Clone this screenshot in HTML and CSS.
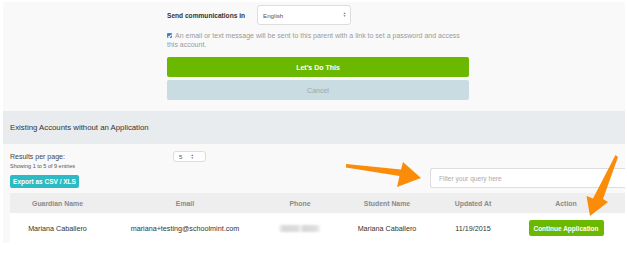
FILE: index.html
```html
<!DOCTYPE html>
<html lang="en">
<head>
    <meta charset="UTF-8">
    <meta name="viewport" content="width=device-width, initial-scale=1.0">
    <title>Existing Accounts</title>
    <link rel="stylesheet" href="styles.css">
</head>
<body>

    <div class="panel">
        <div class="parent-form">
            <div class="lang-row">
                <span class="lang-label">Send communications in</span>
                <div class="select lang-select">English<span class="caret">&#9650;<br>&#9660;</span></div>
            </div>
            <p class="notice"><span class="check"></span>An email or text message will be sent to this parent with a link to set a password and access this account.</p>
            <button class="btn-go">Let's Do This</button>
            <button class="btn-cancel">Cancel</button>
        </div>

        <div class="section-head">Existing Accounts without an Application</div>

        <div class="controls">
            <div class="controls-left">
                <div class="per-page">
                    <span>Results per page:</span>
                    <div class="select page-select">5<span class="caret">&#9650;<br>&#9660;</span></div>
                </div>
                <div class="showing">Showing 1 to 5 of 9 entries</div>
                <button class="btn-export">Export as CSV / XLS</button>
            </div>
            <div class="filter">Filter your query here</div>
        </div>

        <table class="accounts">
            <colgroup>
                <col style="width: 95px">
                <col style="width: 160px">
                <col style="width: 70px">
                <col style="width: 104px">
                <col style="width: 68px">
                <col style="width: 118px">
            </colgroup>
            <thead>
                <tr>
                    <th>Guardian Name</th>
                    <th>Email</th>
                    <th>Phone</th>
                    <th>Student Name</th>
                    <th>Updated At</th>
                    <th>Action</th>
                </tr>
            </thead>
            <tbody>
                <tr>
                    <td>Mariana Caballero</td>
                    <td>mariana+testing@schoolmint.com</td>
                    <td><span class="phone-blur"></span></td>
                    <td>Mariana Caballero</td>
                    <td>11/19/2015</td>
                    <td><button class="btn-continue">Continue Application</button></td>
                </tr>
            </tbody>
        </table>
    </div>

    <!-- orange callout arrows drawn over the screenshot -->
    <svg class="arrows" width="627" height="255" viewBox="0 0 627 255">
        <polygon points="346,164 401,169.5 403,162 421,178 397,187 399.5,176 346,167.5" fill="#fa8c0a"/>
        <polygon points="615.5,155 618,157 603,199 608,202 590,216 586.5,196 593,198.5" fill="#fa8c0a"/>
    </svg>

</body>
</html>
```

FILE: styles.css
```css
body {
    margin: 0;
    background: #fff;
    font-family: "Liberation Sans", Arial, sans-serif;
    color: #333;
    width: 627px;
    height: 255px;
    position: relative;
    overflow: hidden;
}

.panel {
    margin: 2px 2px 0 3px;
    background: #f9f9f9;
}

.parent-form {
    margin-left: 164px;
    width: 302px;
    padding-top: 3px;
    padding-bottom: 11px;
}

.lang-row {
    display: flex;
    align-items: center;
}

.lang-label {
    font-size: 6.6px;
    font-weight: bold;
    width: 90px;
    color: #333;
}

.select {
    background: #fff;
    border: 1px solid #ddd;
    border-radius: 3px;
    color: #555;
    display: flex;
    align-items: center;
    justify-content: space-between;
    box-sizing: border-box;
}

.caret {
    font-size: 3px;
    line-height: 3px;
    color: #666;
    text-align: center;
}

.lang-select {
    width: 94px;
    height: 20px;
    padding: 0 4px 0 5px;
    font-size: 6.2px;
}

.notice {
    margin: 6px 0 0;
    font-size: 7px;
    line-height: 9px;
    color: #999;
}

.check {
    display: inline-block;
    position: relative;
    width: 5px;
    height: 5px;
    margin-right: 3px;
    background: #3a86d6;
    border-radius: 1px;
    vertical-align: 0;
}

.check::after {
    content: "";
    position: absolute;
    left: 1.5px;
    top: 0.5px;
    width: 1px;
    height: 2.5px;
    border: solid #fff;
    border-width: 0 0.7px 0.7px 0;
    transform: rotate(45deg);
}

.btn-go,
.btn-cancel {
    display: block;
    width: 302px;
    height: 20px;
    border: none;
    border-radius: 2px;
    font-family: inherit;
    font-size: 7px;
    padding: 0;
}

.btn-go {
    margin-top: 8px;
    background: #6bb800;
    color: #fff;
    font-weight: bold;
}

.btn-cancel {
    margin-top: 3px;
    background: #c8dce1;
    color: #9aa;
}

.section-head {
    height: 33px;
    background: #e8ecef;
    display: flex;
    align-items: center;
    padding-left: 7px;
    font-size: 7.8px;
    color: #333;
}

.controls {
    display: flex;
    justify-content: space-between;
    align-items: flex-end;
    padding: 7px 0 5px 7px;
}

.per-page {
    display: flex;
    align-items: center;
    font-size: 7px;
    color: #444;
}

.per-page span {
    width: 163px;
}

.page-select {
    width: 33px;
    height: 11px;
    padding: 0 3px 0 5px;
    font-size: 6px;
}

.showing {
    font-size: 5.5px;
    color: #555;
    margin-top: 1px;
}

.btn-export {
    margin-top: 6px;
    background: #2cbac3;
    color: #fff;
    border: none;
    border-radius: 2px;
    height: 13px;
    width: 69px;
    padding: 0;
    font-family: inherit;
    font-size: 6.5px;
    font-weight: bold;
}

.filter {
    width: 195px;
    height: 20px;
    box-sizing: border-box;
    background: #fff;
    border: 1px solid #ddd;
    border-right: none;
    border-radius: 3px 0 0 3px;
    display: flex;
    align-items: center;
    padding-left: 8px;
    font-size: 6.6px;
    color: #aaa;
}

.accounts {
    margin-left: 7px;
    width: 615px;
    border-collapse: collapse;
    table-layout: fixed;
}

.accounts th {
    height: 20px;
    background: #eee;
    font-size: 6.9px;
    font-weight: bold;
    color: #8a8a8a;
    padding: 0;
    white-space: nowrap;
}

.accounts td {
    height: 30px;
    background: #fff;
    text-align: center;
    font-size: 7.2px;
    color: #333;
    padding: 0;
    white-space: nowrap;
}

.phone-blur {
    display: inline-block;
    width: 41px;
    height: 7px;
    margin-left: -2px;
    background: linear-gradient(90deg, #f4f4f4 0, #d8d8d8 10%, #dcdcdc 45%, #f0f0f0 52%, #d8d8d8 60%, #dedede 90%, #f4f4f4 100%);
    filter: blur(1px);
    vertical-align: middle;
}

.btn-continue {
    background: #6bb800;
    color: #fff;
    border: none;
    border-radius: 2px;
    height: 16px;
    width: 75px;
    padding: 0;
    font-family: inherit;
    font-size: 6.5px;
    font-weight: bold;
}

.arrows {
    position: absolute;
    left: 0;
    top: 0;
    pointer-events: none;
}
```
